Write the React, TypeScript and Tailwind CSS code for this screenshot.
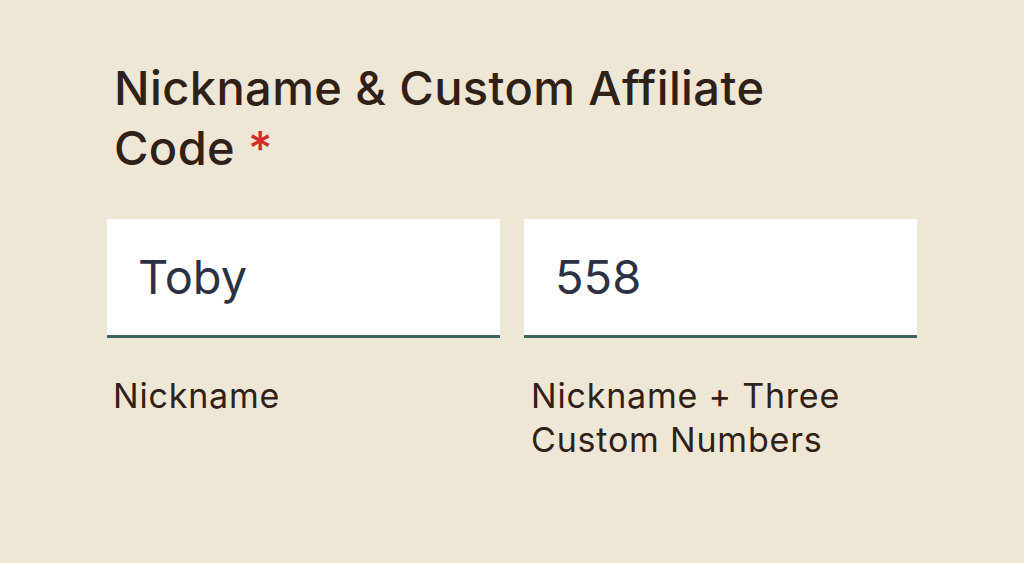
import React from "react";

export default function App() {
  return (
    <div
      className="w-[1024px] h-[563px] bg-[#efe7d6] overflow-hidden"
      style={{ fontFamily: "Inter, 'Noto Sans', sans-serif" }}
    >
      <div className="pl-[107px] pr-[107px] pt-[58px]">
        <div className="pl-[7px] w-[760px] text-[47px] leading-[60px] font-medium tracking-[0.4px] text-[#2f2117]">
          Nickname &amp; Custom Affiliate Code <span className="text-[#d22b2b]">*</span>
        </div>
        <div className="mt-[41px] grid grid-cols-2 gap-[24px]">
          <div className="flex flex-col">
            <div className="h-[119px] bg-white border-b-[3px] border-[#3a6461] flex items-center pl-[31px] text-[47px] text-[#2c3244]">
              Toby
            </div>
            <div className="mt-[36px] pl-[6px] text-[34px] leading-[44px] tracking-[0.8px] text-[#2f2117]">
              Nickname
            </div>
          </div>
          <div className="flex flex-col">
            <div className="h-[119px] bg-white border-b-[3px] border-[#3a6461] flex items-center pl-[31px] text-[47px] text-[#2c3244]">
              558
            </div>
            <div className="mt-[36px] pl-[7px] text-[34px] leading-[44px] tracking-[0.8px] text-[#2f2117] w-[330px]">
              Nickname + Three Custom Numbers
            </div>
          </div>
        </div>
      </div>
    </div>
  );
}
